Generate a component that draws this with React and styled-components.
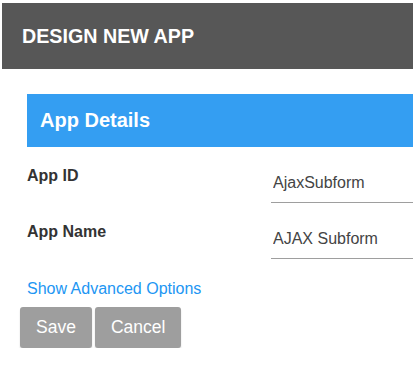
// Libs
import React from 'react';
import styled, { createGlobalStyle } from 'styled-components';

// Global
const GlobalStyle = createGlobalStyle`
  body {
    margin: 0;
    background: #fff;
    font-family: "Liberation Sans", Arial, sans-serif;
    overflow: hidden;
  }
`;

// Styled
const Page = styled.div`
  width: 100%;
  padding-top: 3px;
`;

const Header = styled.div`
  height: 66px;
  margin-left: 2px;
  padding-left: 20px;
  display: flex;
  align-items: center;
  background: #575757;
`;

const HeaderTitle = styled.h1`
  margin: 0;
  font-size: 19.7px;
  font-weight: bold;
  color: #fff;
`;

const Content = styled.div`
  padding-left: 27px;
`;

const SectionBar = styled.div`
  height: 53px;
  margin-top: 25px;
  padding-left: 13px;
  display: flex;
  align-items: center;
  background: #349ef2;
`;

const SectionTitle = styled.h2`
  margin: 0;
  font-size: 20px;
  font-weight: bold;
  color: #fff;
`;

const Fields = styled.div`
  margin-top: 20px;
  display: flex;
  flex-direction: column;
  gap: 20px;
`;

const Row = styled.div`
  display: grid;
  grid-template-columns: 244px 1fr;
  align-items: start;
`;

const Label = styled.label`
  font-size: 16px;
  line-height: 18px;
  font-weight: bold;
  color: #333;
`;

const Input = styled.input`
  width: 100%;
  box-sizing: border-box;
  height: 36px;
  padding: 7px 2px 10px;
  border: none;
  border-bottom: 1px solid #9e9e9e;
  font-family: "Liberation Sans", Arial, sans-serif;
  font-size: 16px;
  line-height: 18px;
  color: #444;
  outline: none;
  background: transparent;
`;

const AdvancedLink = styled.a`
  display: block;
  margin-top: 21px;
  font-size: 16px;
  line-height: 18px;
  color: #2196f3;
  text-decoration: none;
  cursor: pointer;
`;

const Actions = styled.div`
  margin-top: 9px;
  margin-left: -7px;
  display: flex;
  gap: 3px;
`;

const Button = styled.button`
  height: 41px;
  padding: 0 16px;
  border: none;
  border-radius: 3px;
  background: #9e9e9e;
  color: #fff;
  font-family: "Liberation Sans", Arial, sans-serif;
  font-size: 17.5px;
  box-shadow: 0 2px 2px rgba(0, 0, 0, 0.14);
  cursor: pointer;
`;

const App = () => (
  <Page>
    <GlobalStyle />
    <Header>
      <HeaderTitle>DESIGN NEW APP</HeaderTitle>
    </Header>
    <Content>
      <SectionBar>
        <SectionTitle>App Details</SectionTitle>
      </SectionBar>
      <Fields>
        <Row>
          <Label>App ID</Label>
          <Input defaultValue="AjaxSubform" />
        </Row>
        <Row>
          <Label>App Name</Label>
          <Input defaultValue="AJAX Subform" />
        </Row>
      </Fields>
      <AdvancedLink>Show Advanced Options</AdvancedLink>
      <Actions>
        <Button>Save</Button>
        <Button>Cancel</Button>
      </Actions>
    </Content>
  </Page>
);

export default App;
